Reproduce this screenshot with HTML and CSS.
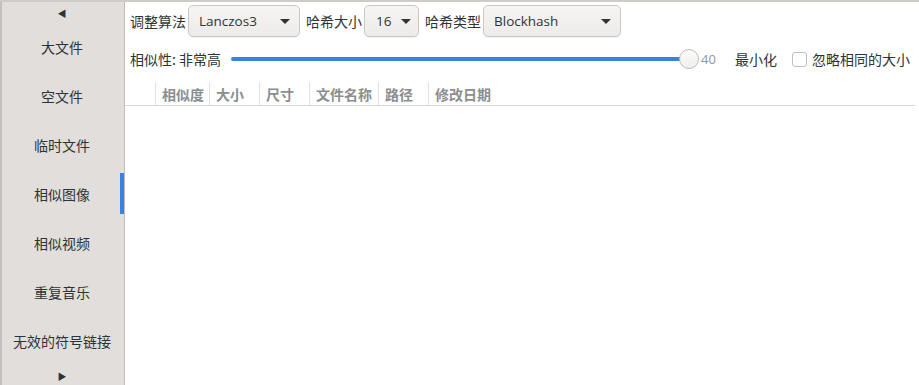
FILE: index.html
```html
<!DOCTYPE html>
<html lang="zh">
<head>
<meta charset="utf-8">
<link rel="stylesheet" href="styles.css">
</head>
<body>
<div class="topstrip"></div>
<div class="app">
  <aside class="sidebar">
    <div class="arrow">◀</div>
    <div class="tabs">
      <div class="tab">大文件</div>
      <div class="tab">空文件</div>
      <div class="tab">临时文件</div>
      <div class="tab active">相似图像</div>
      <div class="tab">相似视频</div>
      <div class="tab">重复音乐</div>
      <div class="tab">无效的符号链接</div>
    </div>
    <div class="arrow down">▶</div>
  </aside>
  <main class="content">
    <div class="row1">
      <span class="label">调整算法</span>
      <div class="combo w-lanczos"><span>Lanczos3</span><span class="caret"></span></div>
      <span class="label">哈希大小</span>
      <div class="combo w-size"><span>16</span><span class="caret"></span></div>
      <span class="label">哈希类型</span>
      <div class="combo w-type"><span>Blockhash</span><span class="caret"></span></div>
    </div>
    <div class="row2">
      <span class="label">相似性: 非常高</span>
      <div class="slider">
        <div class="trough"></div>
        <div class="knob"></div>
      </div>
      <span class="value">40</span>
      <span class="label minimize">最小化</span>
      <span class="check"></span>
      <span class="label">忽略相同的大小</span>
    </div>
    <div class="header">
      <div class="col c0"></div>
      <div class="col c1">相似度</div>
      <div class="col c2">大小</div>
      <div class="col c3">尺寸</div>
      <div class="col c4">文件名称</div>
      <div class="col c5">路径</div>
      <div class="col c6">修改日期</div>
    </div>
  </main>
</div>
</body>
</html>
```
FILE: styles.css
```css
* { box-sizing: border-box; }
html, body {
  margin: 0;
  padding: 0;
  width: 919px;
  height: 385px;
  overflow: hidden;
  background: #ffffff;
  font-family: "Noto Sans CJK SC", "Noto Sans", sans-serif;
  font-size: 14px;
  color: #2e3436;
}
.topstrip {
  height: 2px;
  background: #cfcbc6;
}
.app {
  display: flex;
  height: 383px;
}
.sidebar {
  width: 125px;
  flex: none;
  background: #e1dedb;
  border-left: 2px solid #c4c0bb;
  border-right: 1px solid #c0bcb6;
  display: flex;
  flex-direction: column;
  align-items: stretch;
}
.arrow {
  height: 21px;
  display: flex;
  align-items: center;
  justify-content: center;
  font-size: 9px;
  color: #2e3436;
  padding-right: 2px;
  padding-top: 2px;
}
.arrow.down {
  margin-top: auto;
  height: 20px;
  padding-top: 2px;
}
.tabs {
  display: flex;
  flex-direction: column;
  padding-top: 0;
}
.tab {
  height: 49px;
  display: flex;
  align-items: center;
  justify-content: center;
  padding-right: 2px;
  color: #2e3436;
  white-space: nowrap;
}
.tab.active {
  box-shadow: inset -4px 0 0 #3584e4;
}
.tabs .tab.active {
  margin: 4px 0;
  height: 41px;
}
.content {
  flex: 1;
  padding: 2px 4px 0 5px;
  display: flex;
  flex-direction: column;
}
.row1 {
  display: flex;
  align-items: center;
  gap: 2px;
  height: 34px;
}
.label { white-space: nowrap; }
.combo {
  height: 32px;
  border: 1px solid #cdc7c2;
  border-radius: 5px;
  background: linear-gradient(#f6f5f4, #edebe9);
  display: flex;
  align-items: center;
  justify-content: space-between;
  padding: 0 9px 0 10px;
  font-family: "Open Sans", "Noto Sans", sans-serif;
  font-size: 13.5px;
  box-shadow: 0 1px 1px rgba(0,0,0,0.06);
}
.w-lanczos { width: 112px; margin-right: 4px; }
.w-size { width: 55px; padding: 0 7px 0 11px; margin-right: 4px; }
.w-type { width: 138px; }
.caret {
  width: 0;
  height: 0;
  border-left: 5px solid transparent;
  border-right: 5px solid transparent;
  border-top: 5px solid #2e3436;
}
.row2 {
  display: flex;
  align-items: center;
  height: 42px;
}
.slider {
  position: relative;
  width: 470px;
  height: 24px;
  margin-left: 10px;
  display: flex;
  align-items: center;
}
.trough {
  width: 460px;
  height: 4px;
  border-radius: 2px;
  background: #3584e4;
}
.knob {
  position: absolute;
  left: 448px;
  top: 2px;
  width: 20px;
  height: 20px;
  border-radius: 50%;
  border: 1px solid #c0bbb6;
  background: linear-gradient(#fbfbfa, #f1efee);
}
.value {
  color: #949494;
  font-family: "Open Sans", "Noto Sans", sans-serif;
  font-size: 13px;
  width: 34px;
}
.minimize { margin-right: 15px; }
.check {
  width: 15px;
  height: 15px;
  border: 1px solid #c3bfba;
  border-radius: 3px;
  background: #ffffff;
  margin-right: 5px;
}
.header {
  display: flex;
  height: 24px;
  border-bottom: 1px solid #dad8d6;
  margin-left: -5px;
  margin-top: 2px;
}
.col {
  height: 23px;
  display: flex;
  align-items: center;
  padding-left: 6px;
  border-left: 1px solid #e3e1df;
  color: #8b8e8f;
  font-weight: bold;
  font-size: 14px;
  white-space: nowrap;
}
.c0 { width: 30px; border-left: none; }
.c1 { width: 54px; }
.c2 { width: 50px; }
.c3 { width: 50px; }
.c4 { width: 69px; }
.c5 { width: 50px; }
.c6 { flex: 1; }
```
